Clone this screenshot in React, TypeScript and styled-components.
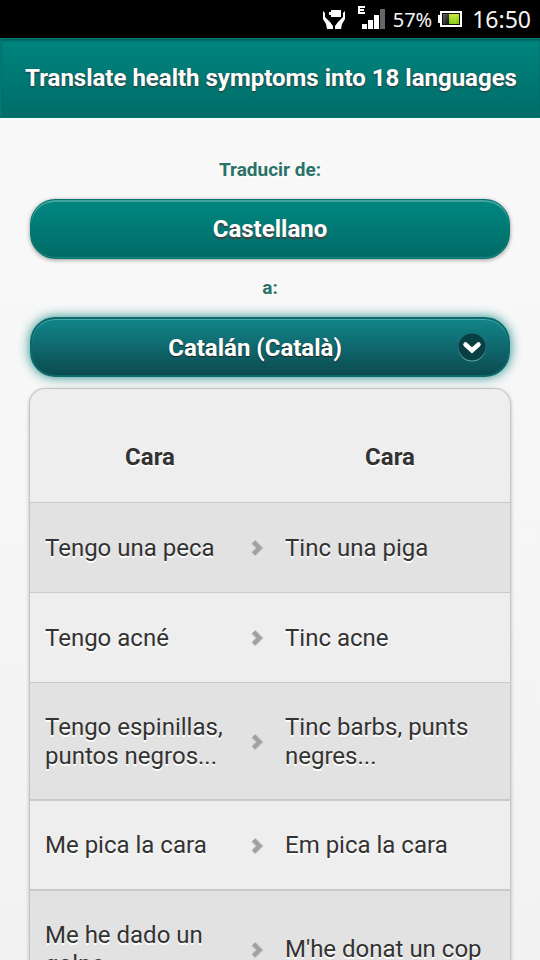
import React, { useState } from "react";
import styled, { createGlobalStyle } from "styled-components";

const GlobalStyle = createGlobalStyle`
  *, *::before, *::after { box-sizing: border-box; }
  html, body, #root { height: 100%; }
  body {
    margin: 0;
    font-family: Roboto, "Noto Sans", sans-serif;
    font-size: 24px;
    line-height: 29px;
    color: #333;
  }
`;

const Page = styled.div`
  display: flex;
  flex-direction: column;
  height: 100vh;
  background: #f4f4f4;
`;

const StatusBar = styled.div`
  display: flex;
  align-items: center;
  justify-content: flex-end;
  flex: none;
  height: 38px;
  padding: 0 9px;
  background: #000;
  color: #f4f4f4;
  font-family: "Noto Sans", sans-serif;
`;

const StatusIcons = styled.div`
  display: flex;
  align-items: center;
  gap: 12px;
`;

const BatteryLevel = styled.span`
  margin: 0 6px 0 8px;
  font-size: 20px;
`;

const Clock = styled.time`
  margin-left: 10px;
  font-size: 23px;
`;

const Header = styled.header`
  display: flex;
  align-items: center;
  justify-content: center;
  flex: none;
  height: 80px;
  border: solid #00786f;
  border-width: 1px 0 1px 2px;
  background: linear-gradient(#00857f, #006d68);
  box-shadow: inset 0 2px 2px #00645f;
`;

const Title = styled.h1`
  margin: 0;
  color: #fff;
  font-size: 24px;
  line-height: 29px;
  font-weight: 700;
  white-space: nowrap;
  text-shadow: 0 1px 2px #333;
`;

const Content = styled.main`
  flex: 1;
  min-height: 0;
  overflow-y: auto;
  scrollbar-width: none;
  padding: 41px 30px 0;
  background: linear-gradient(#f9f9f9, #f2f2f2);
`;

const Label = styled.label`
  display: block;
  color: #2a7268;
  font-size: 19px;
  line-height: 22px;
  font-weight: 700;
  text-align: center;
  text-shadow: 0 1px 0 #fff;
`;

const LanguageSelect = styled.select<{ $active?: boolean }>`
  appearance: none;
  display: block;
  width: 100%;
  height: 60px;
  padding: ${(p) => (p.$active ? "2px 54px 0 24px" : "0 24px")};
  border: ${(p) => (p.$active ? "2px solid #0b6a6c" : "1px solid #00746e")};
  border-radius: 25px;
  outline: none;
  background: ${(p) =>
    p.$active
      ? "linear-gradient(#12858a, #0b4b50)"
      : "linear-gradient(#008781, #006b66)"};
  box-shadow: ${(p) =>
    p.$active
      ? "inset 0 1px 0 #4ca8a8, 0 0 12px #1b8c88"
      : "inset 0 2px 0 #43a39e, inset 0 -1px 0 #228680, 0 1px 4px #00000066"};
  color: #fff;
  font: 700 24px/29px Roboto, "Noto Sans", sans-serif;
  text-align: center;
  text-align-last: center;
  text-shadow: ${(p) => (p.$active ? "0 1px 1px #222" : "0 2px 1px #444")};
`;

const LabelledField = styled.div`
  display: grid;
  gap: 18px;
  margin-bottom: 18px;
`;

const SelectWrap = styled.div`
  position: relative;
`;

const SelectArrow = styled.svg`
  position: absolute;
  top: 16px;
  right: 24px;
  pointer-events: none;
`;

const Panel = styled.section`
  margin-top: -6px;
  border-radius: 15px 15px 0 0;
  background: #eee;
  overflow: hidden;
  box-shadow: 0 0 0 1px #c6c6c6, 0 1px 4px #00000066;
`;

const PhraseTable = styled.table`
  width: 100%;
  border-collapse: collapse;
  table-layout: fixed;
  text-shadow: 0 2px 0 #fff;
`;

const HeadCell = styled.th`
  height: 113px;
  padding: 25px 15px 0;
  font-weight: 700;
  text-align: center;
`;

const PhraseRow = styled.tr`
  border-top: 1px solid #c9c9c9;
  &:nth-child(odd) {
    background: #e2e2e2;
  }
  &:nth-child(n + 4) {
    border-top-width: 2px;
  }
`;

const Cell = styled.td`
  height: 90px;
  padding: 30px 6px 28px 15px;
  vertical-align: middle;
`;

const PhraseLink = styled.a`
  display: flex;
  align-items: center;
  justify-content: space-between;
  color: inherit;
  text-decoration: none;
`;

const ChevronIcon = styled.svg`
  flex: none;
`;

const phrases = [
  ["Tengo una peca", "Tinc una piga"],
  ["Tengo acné", "Tinc acne"],
  ["Tengo espinillas, puntos negros...", "Tinc barbs, punts negres..."],
  ["Me pica la cara", "Em pica la cara"],
  ["Me he dado un golpe", "M'he donat un cop"],
];

const DockIcon = () => (
  <svg width="24" height="26" viewBox="0 0 24 26" fill="#fff" aria-hidden="true">
    <path d="M9 4h10v7H9V9H7V6h2z" />
    <path d="M1 5l2 2v4l5 5 3 4v3H5l-1-5-3-5z" />
    <path d="M23 5l-2 2v4l-5 5-3 4v3h6l1-5 3-5z" />
  </svg>
);

const SignalIcon = () => (
  <svg width="27" height="26" viewBox="0 0 27 26" fill="#fff" aria-hidden="true">
    <path d="M0 0h7v2H2v1h4v2H2v1h5v2H0z" />
    <path d="M4 18h5v5H4zM10 14h5v9h-5zM16 9h5v14h-5z" />
    <path d="M22 3h5v20h-5z" fill="#666" />
  </svg>
);

const BatteryIcon = () => (
  <svg width="24" height="16" viewBox="0 0 24 16" aria-hidden="true">
    <defs>
      <linearGradient id="charge" x2="0" y2="1">
        <stop stopColor="#c8e838" />
        <stop offset="1" stopColor="#78c800" />
      </linearGradient>
      <linearGradient id="drained" x2="1" y2="1">
        <stop stopColor="#666" />
        <stop offset="1" stopColor="#111" />
      </linearGradient>
    </defs>
    <path d="M2 0h22v16H2v-4H0V4h2z" fill="#fff" />
    <path d="M4 2h18v12H4z" fill="#111" />
    <path d="M5 3h6v10H5z" fill="url(#drained)" />
    <path d="M11 3h10v10H11z" fill="url(#charge)" />
    <path d="M14 3v10M17 3v10" stroke="#d5ee70" strokeWidth="1" opacity=".6" />
  </svg>
);

const Chevron = () => (
  <ChevronIcon width="14" height="18" viewBox="0 0 14 18" fill="none" aria-hidden="true">
    <path d="M3.5 3l6 6-6 6" stroke="#c8c8c8" strokeWidth="6" />
    <path d="M3.5 3l6 6-6 6" stroke="#a0a0a0" strokeWidth="4" />
  </ChevronIcon>
);

export default function App() {
  const [source, setSource] = useState("Castellano");
  const [target, setTarget] = useState("Catalán (Català)");

  return (
    <Page>
      <GlobalStyle />
      <StatusBar>
        <StatusIcons>
          <DockIcon />
          <SignalIcon />
        </StatusIcons>
        <BatteryLevel>57%</BatteryLevel>
        <BatteryIcon />
        <Clock>16:50</Clock>
      </StatusBar>
      <Header>
        <Title>Translate health symptoms into 18 languages</Title>
      </Header>
      <Content>
        <LabelledField>
          <Label htmlFor="source">Traducir de:</Label>
          <LanguageSelect
            id="source"
            value={source}
            onChange={(e) => setSource(e.target.value)}
          >
            <option>Castellano</option>
          </LanguageSelect>
        </LabelledField>
        <LabelledField>
          <Label htmlFor="target">a:</Label>
          <SelectWrap>
            <LanguageSelect
              id="target"
              $active
              value={target}
              onChange={(e) => setTarget(e.target.value)}
            >
              <option>Catalán (Català)</option>
            </LanguageSelect>
            <SelectArrow width="28" height="29" viewBox="0 0 28 29" fill="none" aria-hidden="true">
              <circle cx="14" cy="15" r="13.5" fill="#6aa5a3" />
              <circle cx="14" cy="14" r="13.5" fill="#083f42" />
              <path
                d="M7.5 11.5l6.5 6 6.5-6"
                stroke="#fff"
                strokeWidth="4.5"
                strokeLinecap="round"
              />
            </SelectArrow>
          </SelectWrap>
        </LabelledField>
        <Panel>
          <PhraseTable>
            <thead>
              <tr>
                <HeadCell scope="col">Cara</HeadCell>
                <HeadCell scope="col">Cara</HeadCell>
              </tr>
            </thead>
            <tbody>
              {phrases.map(([from, to]) => (
                <PhraseRow key={from}>
                  <Cell>
                    <PhraseLink href="#">
                      <span>{from}</span>
                      <Chevron />
                    </PhraseLink>
                  </Cell>
                  <Cell>{to}</Cell>
                </PhraseRow>
              ))}
            </tbody>
          </PhraseTable>
        </Panel>
      </Content>
    </Page>
  );
}
